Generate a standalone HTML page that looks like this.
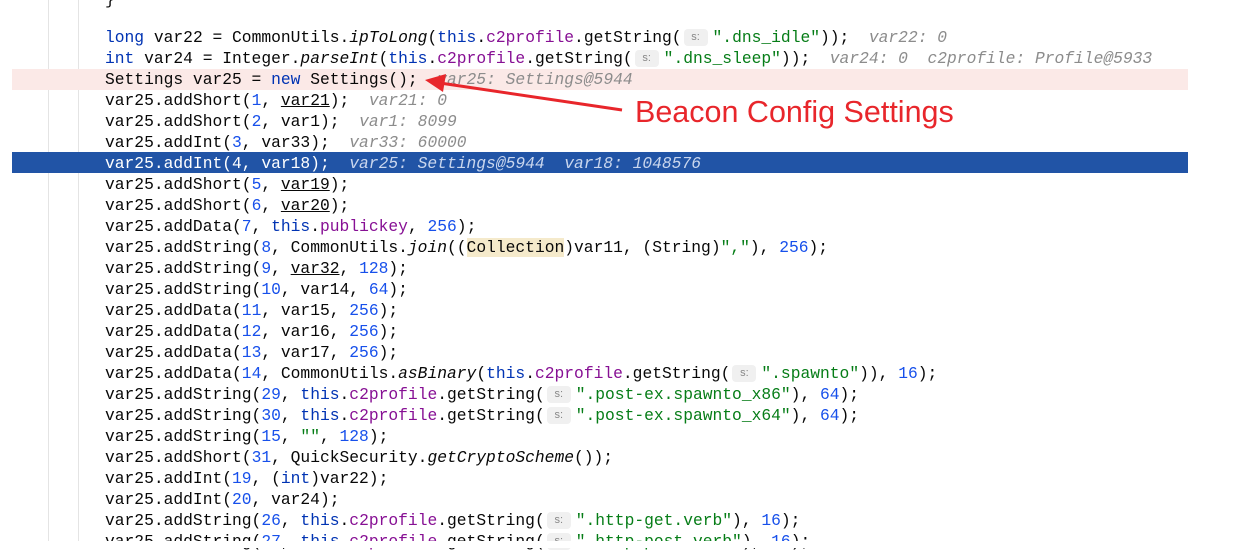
<!DOCTYPE html>
<html><head><meta charset="utf-8"><style>
body{margin:0;width:1252px;height:548px;background:#fff;overflow:hidden;position:relative;font-family:"Liberation Mono",monospace;font-size:16.3px;color:#080808}
.g1{position:absolute;left:48px;top:0;width:1px;height:541px;background:#e4e4e4}
.g2{position:absolute;left:78px;top:0;width:1px;height:541px;background:#e4e4e4}
.row{position:absolute;left:12px;width:1176px;height:21px}
.l{position:absolute;left:105px;height:21px;line-height:21px;white-space:pre}
.k{color:#0033b3}.f{color:#871094}.s{color:#067d17}.n{color:#1750eb}.i{font-style:italic}
.h{color:#8c8c8c;font-style:italic}
.u{text-decoration:underline}
.p{display:inline-block;width:24px;height:17px;line-height:17px;vertical-align:middle;background:#f0f0f0;border-radius:4px;color:#888;font-size:11px;text-align:center;margin:0 5px 0 2px;font-style:normal;font-family:"Liberation Sans",sans-serif}
.sel,.sel span{color:#fff}
.sel .h{color:#c9d6ee}
.col{background:#f5eacb}
.ann{position:absolute;left:635px;top:93px;font-family:"Liberation Sans","Noto Sans CJK SC",sans-serif;font-size:30.5px;color:#e8262b;line-height:38px}
</style></head><body>
<div class="g1"></div><div class="g2"></div>
<div class="row" style="top:69px;background:#fbe9e7"></div>
<div class="row" style="top:152px;background:#2154a6;left:12px"></div>
<div class="l" style="top:-11px">}</div>
<div class="l" style="top:27px"><span class="k">long</span> var22 = CommonUtils.<span class="i">ipToLong</span>(<span class="k">this</span>.<span class="f">c2profile</span>.getString(<span class="p">s:</span><span class="s">".dns_idle"</span>));  <span class="h">var22: 0</span></div>
<div class="l" style="top:48px"><span class="k">int</span> var24 = Integer.<span class="i">parseInt</span>(<span class="k">this</span>.<span class="f">c2profile</span>.getString(<span class="p">s:</span><span class="s">".dns_sleep"</span>));  <span class="h">var24: 0  c2profile: Profile@5933</span></div>
<div class="l" style="top:69px">Settings var25 = <span class="k">new</span> Settings();  <span class="h">var25: Settings@5944</span></div>
<div class="l" style="top:90px">var25.addShort(<span class="n">1</span>, <span class="u">var21</span>);  <span class="h">var21: 0</span></div>
<div class="l" style="top:111px">var25.addShort(<span class="n">2</span>, var1);  <span class="h">var1: 8099</span></div>
<div class="l" style="top:132px">var25.addInt(<span class="n">3</span>, var33);  <span class="h">var33: 60000</span></div>
<div class="l sel" style="top:153px">var25.addInt(4, var18);  <span class="h">var25: Settings@5944  var18: 1048576</span></div>
<div class="l" style="top:174px">var25.addShort(<span class="n">5</span>, <span class="u">var19</span>);</div>
<div class="l" style="top:195px">var25.addShort(<span class="n">6</span>, <span class="u">var20</span>);</div>
<div class="l" style="top:216px">var25.addData(<span class="n">7</span>, <span class="k">this</span>.<span class="f">publickey</span>, <span class="n">256</span>);</div>
<div class="l" style="top:237px">var25.addString(<span class="n">8</span>, CommonUtils.<span class="i">join</span>((<span class="col">Collection</span>)var11, (String)<span class="s">","</span>), <span class="n">256</span>);</div>
<div class="l" style="top:258px">var25.addString(<span class="n">9</span>, <span class="u">var32</span>, <span class="n">128</span>);</div>
<div class="l" style="top:279px">var25.addString(<span class="n">10</span>, var14, <span class="n">64</span>);</div>
<div class="l" style="top:300px">var25.addData(<span class="n">11</span>, var15, <span class="n">256</span>);</div>
<div class="l" style="top:321px">var25.addData(<span class="n">12</span>, var16, <span class="n">256</span>);</div>
<div class="l" style="top:342px">var25.addData(<span class="n">13</span>, var17, <span class="n">256</span>);</div>
<div class="l" style="top:363px">var25.addData(<span class="n">14</span>, CommonUtils.<span class="i">asBinary</span>(<span class="k">this</span>.<span class="f">c2profile</span>.getString(<span class="p">s:</span><span class="s">".spawnto"</span>)), <span class="n">16</span>);</div>
<div class="l" style="top:384px">var25.addString(<span class="n">29</span>, <span class="k">this</span>.<span class="f">c2profile</span>.getString(<span class="p">s:</span><span class="s">".post-ex.spawnto_x86"</span>), <span class="n">64</span>);</div>
<div class="l" style="top:405px">var25.addString(<span class="n">30</span>, <span class="k">this</span>.<span class="f">c2profile</span>.getString(<span class="p">s:</span><span class="s">".post-ex.spawnto_x64"</span>), <span class="n">64</span>);</div>
<div class="l" style="top:426px">var25.addString(<span class="n">15</span>, <span class="s">""</span>, <span class="n">128</span>);</div>
<div class="l" style="top:447px">var25.addShort(<span class="n">31</span>, QuickSecurity.<span class="i">getCryptoScheme</span>());</div>
<div class="l" style="top:468px">var25.addInt(<span class="n">19</span>, (<span class="k">int</span>)var22);</div>
<div class="l" style="top:489px">var25.addInt(<span class="n">20</span>, var24);</div>
<div class="l" style="top:510px">var25.addString(<span class="n">26</span>, <span class="k">this</span>.<span class="f">c2profile</span>.getString(<span class="p">s:</span><span class="s">".http-get.verb"</span>), <span class="n">16</span>);</div>
<div class="l" style="top:531px">var25.addString(<span class="n">27</span>, <span class="k">this</span>.<span class="f">c2profile</span>.getString(<span class="p">s:</span><span class="s">".http-post.verb"</span>), <span class="n">16</span>);</div>
<div style="position:absolute;left:0;top:541px;width:1252px;height:7px;background:#fff"></div>
<svg style="position:absolute;left:0;top:0" width="1252" height="548">
<path d="M622 110 L440 83" stroke="#e8262b" stroke-width="3" fill="none"/>
<path d="M425 80 L446 74 L443 92 Z" fill="#e8262b"/>
</svg>
<div class="ann">Beacon Config Settings</div>
</body></html>
